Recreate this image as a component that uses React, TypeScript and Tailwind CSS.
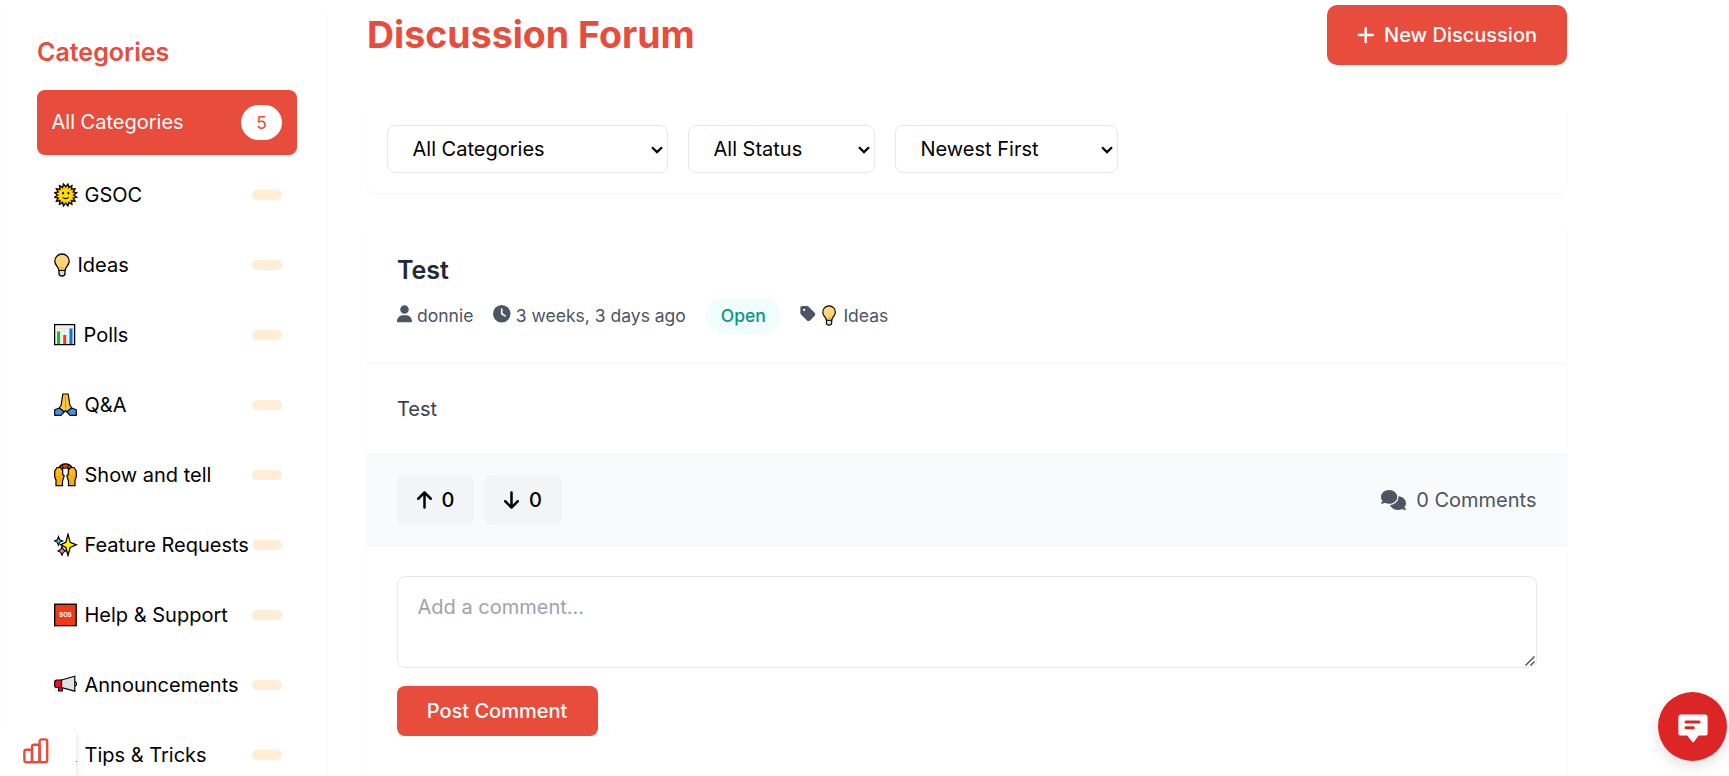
import type { ReactNode } from "react";
import { FaArrowDown, FaArrowUp, FaClock, FaComments, FaPlus, FaTag, FaUser } from "react-icons/fa6";

function Sun() {
  const rays: string[] = [];
  for (let i = 0; i < 32; i++) {
    const r = i % 2 === 0 ? 11.2 : 8.2;
    const a = (Math.PI * 2 * (i + 1)) / 32;
    rays.push(`${(11.7 + r * Math.sin(a)).toFixed(2)},${(12 - r * Math.cos(a)).toFixed(2)}`);
  }
  return (
    <svg viewBox="0 0 24 24" className="h-6 w-6">
      <polygon points={rays.join(" ")} fill="#fcb900" stroke="#000" strokeWidth="1.3" />
      <circle cx="11.7" cy="12" r="6.6" fill="#ffe000" />
      <ellipse cx="9" cy="10.200" rx=".9" ry="1.400" fill="#000" />
      <ellipse cx="14.400" cy="10.200" rx=".9" ry="1.400" fill="#000" />
      <path d="M8.700 14.300q3 2.600 6 0" fill="none" stroke="#000" strokeWidth="1.100" />
    </svg>
  );
}

function Bulb({ className }: { className: string }) {
  return (
    <svg viewBox="0 0 17 24" className={className}>
      <path d="M5 17v3.500q0 2.500 3 2.500t3-2.500V17z" fill="#d8d8d8" stroke="#000" strokeWidth="1.300" />
      <path d="M5 17.300C4.800 13.900.8 12.300.8 8.200a7.200 7.200 0 0 1 14.400 0c0 4.100-4 5.700-4.200 9.100z" fill="#ffd679" stroke="#000" strokeWidth="1.300" />
      <path d="M5.700 13.800h4.600l-.3 3H6z" fill="#fcc21b" />
    </svg>
  );
}

function Chart() {
  return (
    <svg viewBox="0 0 24 24" className="h-6 w-6">
      <rect x=".6" y="1.600" width="20" height="20" fill="#f2f2f2" stroke="#000" strokeWidth="1.300" />
      <path d="M6.500 2v19M10.500 2v19M15 2v19M1 5.500h19" stroke="#ddd" strokeWidth=".6" />
      <path d="M3 8.500h3V21H3z" fill="#16c60c" />
      <path d="M9.200 12h3v9h-3z" fill="#f03a17" />
      <path d="M15.500 5.500h3V21h-3z" fill="#0078d7" />
    </svg>
  );
}

function Pray() {
  return (
    <svg viewBox="0 0 24 24" className="h-6 w-6">
      <path d="M8.800 1h5.400l1.600 11 2.700 4-4.500 4-2.500-2.500L9 20l-4.500-4 2.700-4z" fill="#ffc83d" stroke="#000" strokeWidth="1.200" strokeLinejoin="round" />
      <path d="M5.500 15 10.200 18.700 7 22.300H.7v-5.500zM17.500 15 12.800 18.700l3.200 3.600h6.300v-5.500z" fill="#3f94e4" stroke="#000" strokeWidth="1.200" strokeLinejoin="round" />
      <path d="M11.500 1.500v15" stroke="#d69a00" strokeWidth="1" />
    </svg>
  );
}

function RaisedHands() {
  return (
    <svg viewBox="0 0 24 24" className="h-6 w-6">
      <path d="M4.500 5.500Q6.500.8 11.500.8t7 4.700l-3 1q-4-3-8 0z" fill="#da4a10" stroke="#000" strokeWidth="1.200" />
      <path d="m8.300 1.500 1 3.500M14.700 1.500l-1 3.500" stroke="#000" strokeWidth=".9" />
      <path d="M2 22.700V17L.7 14V8L3 4.500h3.500L8.700 7v4.500l1.500 1.300-1.700 5.200v4.700zM21 22.700V17l1.300-3V8L20 4.500h-3.500L14.300 7v4.500l-1.500 1.300 1.700 5.200v4.700z" fill="#f9ae0a" stroke="#000" strokeWidth="1.200" strokeLinejoin="round" />
      <path d="M3.500 6.500v6M6 6.500v5M17 6.500v5M19.500 6.500v6" stroke="#ffd34e" strokeWidth="1" />
    </svg>
  );
}

function Sparkles() {
  return (
    <svg viewBox="0 0 24 24" className="h-6 w-6">
      <path d="M4.500 3.500 5.700 6.800 8.700 8 5.700 9.300l-1.200 3-1.200-3L.5 8l2.800-1.200z" fill="#3fc7f4" stroke="#000" strokeWidth="1.100" />
      <path d="m8 13.500 1.300 3 2.700 1.500-2.700 1.300-1.300 3-1.300-3L4 18l2.700-1.500z" fill="#e88abf" stroke="#000" strokeWidth="1.100" />
      <path d="M14 1.200 16.200 9.300l6.300 2.500-6.300 2.700-2.200 8-2.200-8-5.300-2.700 5.300-2.500z" fill="#fff100" stroke="#000" strokeWidth="1.300" />
    </svg>
  );
}

function Sos() {
  return (
    <svg viewBox="0 0 24 24" className="h-6 w-6">
      <rect x=".7" y="1.200" width="21.500" height="21.500" fill="#f03a17" stroke="#000" strokeWidth="1.300" />
      <text x="11.500" y="14.200" textAnchor="middle" fontSize="6" fontWeight="700" fontFamily="Inter, sans-serif" fill="#fff">SOS</text>
    </svg>
  );
}

function Megaphone() {
  return (
    <svg viewBox="0 0 24 24" className="h-6 w-6">
      <path d="M4.500 13.500V18h3.800v-3.500" fill="#e81224" stroke="#000" strokeWidth="1.200" />
      <path d="M7.500 7 20.800 3.200v15L7.500 14.500z" fill="#e3e3e3" stroke="#000" strokeWidth="1.200" />
      <path d="M7.500 7H2.300Q.7 7.300.7 9v3.500q0 2 1.600 2h5.200z" fill="#e81224" stroke="#000" strokeWidth="1.200" />
      <path d="M21 8.700q1.500.4 1.500 2.200T21 13" fill="none" stroke="#000" strokeWidth="1.200" />
    </svg>
  );
}

const categories: { name: string; icon: ReactNode; box: string }[] = [
  { name: "GSOC", icon: <Sun />, box: "w-[30.5px]" },
  { name: "Ideas", icon: <Bulb className="h-6 w-[17px]" />, box: "w-[23.5px]" },
  { name: "Polls", icon: <Chart />, box: "w-[29.5px]" },
  { name: "Q&A", icon: <Pray />, box: "w-[30.5px]" },
  { name: "Show and tell", icon: <RaisedHands />, box: "w-[30.5px]" },
  { name: "Feature Requests", icon: <Sparkles />, box: "w-[30.5px]" },
  { name: "Help & Support", icon: <Sos />, box: "w-[30.5px]" },
  { name: "Announcements", icon: <Megaphone />, box: "w-[30.5px]" },
  { name: "Tips & Tricks", icon: null, box: "w-[30.5px]" },
];

function Sidebar() {
  return (
    <aside className="mt-[5px] ml-[7px] h-[900px] w-80 shrink-0 rounded-[10px] p-[30px] shadow-[0_1px_3px_rgba(0,0,0,0.05)]">
      <h2 className="mb-5 text-[25px] leading-[35px] font-semibold text-[#e74c3c]">Categories</h2>
      <ul className="flex flex-col gap-2.5">
        <li className="flex items-center justify-between rounded-lg bg-[#e74c3c] py-[15px] pr-[15px] pl-[14.5px] text-white">
          <span className="pb-px">All Categories</span>
          <span className="rounded-full bg-white px-[15px] py-[5px] text-[17.5px] leading-[25px] text-[#e74c3c]">5</span>
        </li>
        {categories.map((c) => (
          <li key={c.name} className="flex items-center justify-between p-[15px]">
            <span className="flex items-center whitespace-nowrap">
              <span className={`ml-[2px] shrink-0 ${c.box}`}>{c.icon}</span>
              {c.name}
            </span>
            <span className="h-2.5 w-[30px] shrink-0 rounded-full bg-[#ffedd5]" />
          </li>
        ))}
      </ul>
    </aside>
  );
}

function Filter({ label, className }: { label: string; className: string }) {
  return (
    <div className={`relative ${className}`}>
      <select className="h-12 w-full appearance-none rounded-lg border border-[#e5e7eb] bg-white px-[24.5px] text-black">
        <option>{label}</option>
      </select>
      <svg viewBox="0 0 12 8" className="pointer-events-none absolute top-[21px] right-[5px] h-2 w-3" fill="none" stroke="#000" strokeWidth="2.200">
        <path d="m1 1.200 5 4.900 5-4.900" />
      </svg>
    </div>
  );
}

function Discussion() {
  return (
    <article className="mt-[30px] h-[700px] overflow-hidden rounded-[10px] shadow-[0_1px_3px_rgba(0,0,0,0.05)]">
      <div className="border-b border-[#f3f4f6] p-[30px]">
        <h3 className="mb-2.5 text-[25px] leading-[35px] font-semibold text-[#1f2937]">Test</h3>
        <div className="flex items-center gap-5 text-[17.5px] leading-[25px] text-[#4b5563]">
          <span className="flex items-center gap-[5px]">
            <FaUser className="mb-[3px] w-[15px]" />
            donnie
          </span>
          <span className="flex items-center gap-[5px]">
            <FaClock className="mb-[3px]" />
            3 weeks, 3 days ago
          </span>
          <span className="rounded-full bg-[#f0fdfa] px-[15px] py-[5px] font-medium text-[#0d9488]">Open</span>
          <span className="-ml-[0.5px] flex items-center">
            <FaTag className="mr-[6px] mb-[3px] w-4" />
            <Bulb className="mr-[6px] h-[21px] w-[15px]" />
            Ideas
          </span>
        </div>
      </div>
      <div className="p-[30px] text-[#374151]">Test</div>
      <div className="flex items-center justify-between border-y border-[#f3f4f6] bg-[#f9fafb] px-[30px] py-5">
        <div className="flex gap-2.5">
          <button className="flex h-[50px] w-[77px] items-center gap-2.5 rounded-lg bg-[#f3f4f6] pl-[19.5px] font-medium text-black">
            <FaArrowUp className="w-[15px]" />0
          </button>
          <button className="flex h-[50px] w-[78px] items-center gap-2.5 rounded-lg bg-[#f3f4f6] pl-5 font-medium text-black">
            <FaArrowDown className="w-[15px]" />0
          </button>
        </div>
        <div className="mr-[0.5px] flex items-center gap-2.5 text-[#4b5563]">
          <FaComments className="w-[25px]" />
          0 Comments
        </div>
      </div>
      <div className="p-[30px]">
        <div className="relative">
          <textarea
            rows={2}
            placeholder="Add a comment..."
            className="block h-[92px] w-full resize-none rounded-lg border border-[#e5e7eb] bg-white px-[19.5px] py-[15px] placeholder:text-[#9ca3af]"
          />
          <svg viewBox="0 0 10 10" className="pointer-events-none absolute right-[2px] bottom-[2px] h-2.5 w-2.5" stroke="#444" strokeWidth="1.300">
            <path d="M.5 9.500l9-9M5.500 9.500l4-4" />
          </svg>
        </div>
        <button className="mt-[18px] h-[50px] w-[201px] rounded-lg bg-[#e74c3c] pr-px font-medium text-white">Post Comment</button>
      </div>
    </article>
  );
}

export default function App() {
  return (
    <div className="relative flex h-[776px] w-full overflow-hidden bg-white font-['Inter',sans-serif] text-[20px] leading-[30px] text-black">
      <Sidebar />
      <main className="ml-10 w-[1200px] shrink-0 pt-[5px]">
        <header className="flex h-[60px] items-center justify-between">
          <h1 className="pb-[2px] text-[37.5px] leading-[45px] font-bold text-[#e74c3c]">Discussion Forum</h1>
          <button className="flex h-[60px] items-center gap-2.5 rounded-[10px] bg-[#e74c3c] px-[30px] font-medium text-white">
            <FaPlus className="w-[17.5px]" />
            New Discussion
          </button>
        </header>
        <div className="mt-10 flex gap-5 rounded-[10px] p-5 shadow-[0_1px_3px_rgba(0,0,0,0.05)]">
          <Filter label="All Categories" className="w-[281px]" />
          <Filter label="All Status" className="w-[187px]" />
          <Filter label="Newest First" className="w-[223px]" />
        </div>
        <Discussion />
      </main>
      <div className="absolute bottom-0 left-0 h-[51px] w-[76px] rounded-tr-[10px] bg-white shadow-[2px_3px_5px_rgba(0,0,0,0.07)]">
        <svg viewBox="0 0 26 26" className="mt-[13px] ml-[23px] h-[26px] w-[26px]" fill="none" stroke="#e74c3c" strokeWidth="2.400" strokeLinejoin="round">
          <rect x="1.400" y="11.800" width="7.600" height="12.500" rx="2" />
          <rect x="9" y="6.800" width="7.600" height="17.500" rx="2" />
          <rect x="16.600" y="1.400" width="7.600" height="22.900" rx="2" />
        </svg>
        <span className="absolute top-[36px] left-[76px] h-px w-px bg-[#555]" />
      </div>
      <button className="absolute top-[692px] left-[1658px] flex h-[69px] w-[69px] items-center justify-center rounded-full bg-[#dc2626] shadow-[0_5px_14px_rgba(0,0,0,0.12)]">
        <svg viewBox="0 0 30 29" className="mt-[3px] h-[29px] w-[30px]">
          <path d="M3 .5h24a2.600 2.600 0 0 1 2.600 2.600v15.800a2.600 2.600 0 0 1-2.600 2.600h-6.300l-4.700 6.300q-1 1-2 0l-4.700-6.300H3a2.600 2.600 0 0 1-2.600-2.600V3.100A2.600 2.600 0 0 1 3 .5z" fill="#fff" />
          <path d="M8 7.900h13M8 13.700h7.300" stroke="#dc2626" strokeWidth="3" strokeLinecap="round" />
        </svg>
      </button>
    </div>
  );
}
